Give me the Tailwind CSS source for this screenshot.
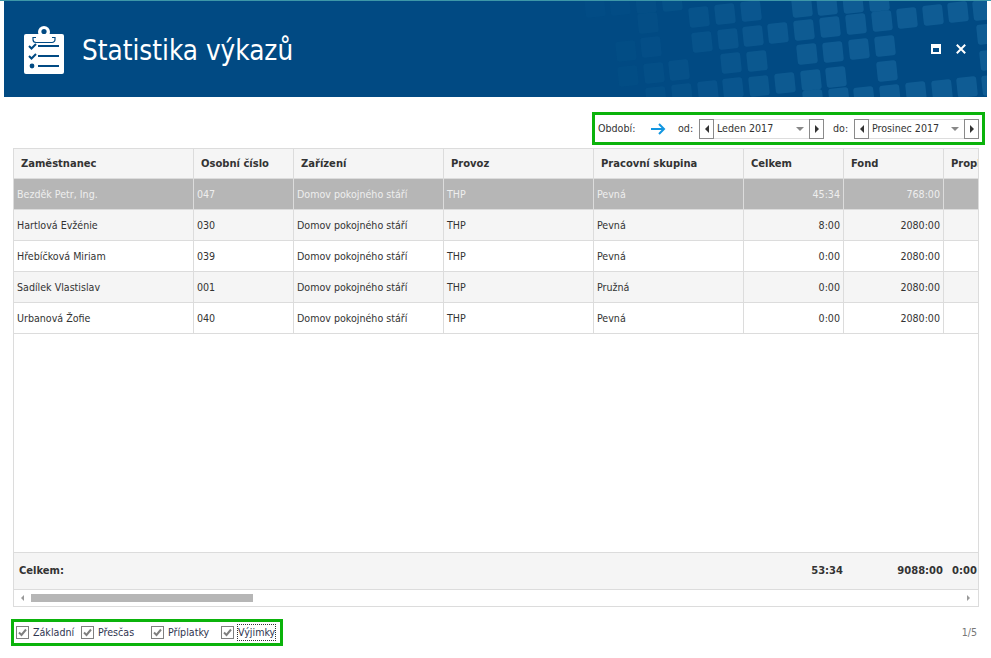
<!DOCTYPE html>
<html lang="cs">
<head>
<meta charset="UTF-8" />
<meta name="viewport" content="width=device-width, initial-scale=1" />
<title>Statistika výkazů</title>
<script src="https://cdn.jsdelivr.net/npm/@tailwindcss/browser@4"></script>
</head>
<body class="bg-white">
<div class="w-[991px] h-[658px] overflow-hidden font-['DejaVu_Sans',sans-serif] font-stretch-condensed text-[10.6px] text-[#333]">

  <!-- Hlavicka -->
  <div class="h-px bg-[#3d97a8]"></div>
  <header class="relative ml-1 w-[983px] h-[96px] bg-[#014a83] overflow-hidden flex items-center">
    <svg id="tiles" class="absolute left-0 top-0" width="983" height="96" viewBox="4 1 983 96"></svg>
    <svg class="relative ml-5 mt-[1px]" width="40" height="48" viewBox="0 0 40 48">
      <rect x="0" y="8" width="40" height="40" rx="2" fill="#fff" />
      <circle cx="20" cy="6" r="6" fill="#fff" />
      <path d="M9 11.5h22v2a3 3 0 0 1-3 3H12a3 3 0 0 1-3-3z" fill="#fff" stroke="#014a83" stroke-width="1.2" />
      <path d="M12 8h16v5H12z" fill="#fff" />
      <circle cx="20" cy="5.5" r="2.6" fill="#014a83" />
      <path d="M5 20l2.5 2.5L12 18M5 30l2.5 2.5L12 28" fill="none" stroke="#014a83" stroke-width="2" />
      <circle cx="8" cy="40" r="2.4" fill="#014a83" />
      <path d="M14 20h21M14 30h21M14 40h21" stroke="#014a83" stroke-width="2.2" />
    </svg>
    <h1 class="relative ml-[18px] mt-1 text-[27.6px] leading-none text-white font-normal">Statistika výkazů</h1>
    <div class="absolute right-[21px] top-[43px] flex items-center gap-[15px]">
      <svg width="10" height="10" viewBox="0 0 10 10"><path fill-rule="evenodd" d="M0 0h10v10H0zM2 4v4h6V4z" fill="#fff" /></svg>
      <svg width="10" height="10" viewBox="0 0 10 10"><path d="M.8.8l8.4 8.4M9.2.8L.8 9.2" stroke="#fff" stroke-width="2" /></svg>
    </div>
  </header>

  <!-- Obdobi -->
  <div class="mt-[15px] ml-[592px] w-[393px] h-[33px] border-[3px] border-[#0bb30b] flex items-center pl-[3px]">
    <span class="w-[53px]">Období:</span>
    <svg width="15" height="12" viewBox="0 0 15 12"><path d="M0 6h13M8 1l5 5-5 5" fill="none" stroke="#1296e0" stroke-width="2" /></svg>
    <span class="ml-3 w-[21px]">od:</span>
    <div class="flex h-5">
      <button class="w-[15px] border border-[#8a8a8a] bg-white flex items-center justify-center"><span class="border-y-[4px] border-r-[4px] border-y-transparent border-r-[#333]"></span></button>
      <div class="w-[95px] border-y border-[#ddd] flex items-center justify-between pl-[3px] pr-[5px]">Leden 2017<span class="border-x-[4px] border-t-[4px] border-x-transparent border-t-[#888]"></span></div>
      <button class="w-[15px] border border-[#8a8a8a] bg-white flex items-center justify-center"><span class="border-y-[4px] border-l-[4px] border-y-transparent border-l-[#333]"></span></button>
    </div>
    <span class="ml-[9px] w-[21px]">do:</span>
    <div class="flex h-5">
      <button class="w-[15px] border border-[#8a8a8a] bg-white flex items-center justify-center"><span class="border-y-[4px] border-r-[4px] border-y-transparent border-r-[#333]"></span></button>
      <div class="w-[95px] border-y border-[#ddd] flex items-center justify-between pl-[3px] pr-[5px]">Prosinec 2017<span class="border-x-[4px] border-t-[4px] border-x-transparent border-t-[#888]"></span></div>
      <button class="w-[15px] border border-[#8a8a8a] bg-white flex items-center justify-center"><span class="border-y-[4px] border-l-[4px] border-y-transparent border-l-[#333]"></span></button>
    </div>
  </div>

  <!-- Tabulka -->
  <div class="mt-[3px] ml-[13px] w-[966px] h-[459px] border border-[#dcdcdc] flex flex-col overflow-hidden">
    <div class="flex h-[30px] shrink-0 bg-[#f5f5f5] border-b border-[#dcdcdc] font-bold text-[11.1px]">
      <div class="w-[180px] shrink-0 border-r border-[#dcdcdc] pl-[7px] pt-px flex items-center">Zaměstnanec</div>
      <div class="w-[100px] shrink-0 border-r border-[#dcdcdc] pl-[7px] pt-px flex items-center">Osobní číslo</div>
      <div class="w-[150px] shrink-0 border-r border-[#dcdcdc] pl-[7px] pt-px flex items-center">Zařízení</div>
      <div class="w-[150px] shrink-0 border-r border-[#dcdcdc] pl-[7px] pt-px flex items-center">Provoz</div>
      <div class="w-[150px] shrink-0 border-r border-[#dcdcdc] pl-[7px] pt-px flex items-center">Pracovní skupina</div>
      <div class="w-[100px] shrink-0 border-r border-[#dcdcdc] pl-[7px] pt-px flex items-center">Celkem</div>
      <div class="w-[100px] shrink-0 border-r border-[#dcdcdc] pl-[7px] pt-px flex items-center">Fond</div>
      <div class="w-[100px] shrink-0 pl-[7px] pt-px flex items-center">Proplaceno</div>
    </div>
    <div id="rows" class="flex-1"></div>
    <div class="h-[38px] shrink-0 bg-[#f5f5f5] border-y border-[#dcdcdc] pt-px flex items-center font-bold text-[11.1px]">
      <div class="w-[729px] shrink-0 pl-[5px]">Celkem:</div>
      <div class="w-[100px] shrink-0 text-right">53:34</div>
      <div class="w-[100px] shrink-0 text-right">9088:00</div>
      <div class="ml-[9px]">0:00</div>
    </div>
    <div class="h-[16px] shrink-0 flex items-center pl-[7px] pr-[8px]">
      <span class="border-y-[3px] border-r-[3px] border-y-transparent border-r-[#999]"></span>
      <div class="ml-[7px] w-[222px] h-2 bg-[#b6b6b6]"></div>
      <span class="ml-auto border-y-[3px] border-l-[3px] border-y-transparent border-l-[#999]"></span>
    </div>
  </div>

  <!-- Filtry -->
  <div class="mt-3 ml-[11px] mr-[14px] flex items-center justify-between">
    <div class="w-[272px] h-[27px] border-[3px] border-[#0bb30b] flex items-center pl-[2px] text-[#2f3550]">
      <div id="checks" class="flex items-center"></div>
    </div>
    <span class="text-[#777]">1/5</span>
  </div>
</div>

<script>
// dlazdice v pozadi hlavicky
const tiles = [
  [595,7],[620,5],[646,3],[672,1],[648,23],[626,51],[651,47],[628,76],[654,73],[679,70],
  [656,97],[682,94],[708,91],[733,88],[759,86],[699,17],[725,14],[751,11],[702,42],[728,39],
  [753,36],[778,33],[731,63],[757,61],[802,7],[827,5],[853,3],[879,1],[804,30],[830,27],
  [856,24],[882,21],[907,18],[933,15],[958,12],[983,10],[807,54],[833,52],[859,49],[885,46],
  [987,34],[887,71],[990,60],[785,83],[811,80],[836,77],[813,100],[839,98],[864,97],[890,95],
  [916,92],[942,90],[967,87],[992,85]
];
document.getElementById('tiles').innerHTML = tiles.map(([x, y]) => {
  const a = Math.max(0.03, Math.min(0.22, (x - 590) / 230 * 0.22));
  return `<rect x="${x - 10}" y="${y - 10}" width="20" height="20" rx="3" fill="#44a0d0" fill-opacity="${a}" transform="rotate(-6 ${x} ${y})" />`;
}).join('');

const people = [
  ['Bezděk Petr, Ing.', '047', 'Pevná', '45:34', '768:00'],
  ['Hartlová Evžénie', '030', 'Pevná', '8:00', '2080:00'],
  ['Hřebíčková Miriam', '039', 'Pevná', '0:00', '2080:00'],
  ['Sadílek Vlastislav', '001', 'Pružná', '0:00', '2080:00'],
  ['Urbanová Žofie', '040', 'Pevná', '0:00', '2080:00']
];
const cell = 'shrink-0 border-r border-[#dcdcdc] px-[3px] pt-px flex items-center';
document.getElementById('rows').innerHTML = people.map((p, i) => {
  const bg = i === 0 ? 'bg-[#b6b6b6] text-[#eeeeee]' : i % 2 ? 'bg-[#f5f5f5]' : 'bg-white';
  return `<div class="flex h-[31px] border-b border-[#dcdcdc] ${bg}">
    <div class="w-[180px] ${cell}">${p[0]}</div>
    <div class="w-[100px] ${cell}">${p[1]}</div>
    <div class="w-[150px] ${cell}">Domov pokojného stáří</div>
    <div class="w-[150px] ${cell}">THP</div>
    <div class="w-[150px] ${cell}">${p[2]}</div>
    <div class="w-[100px] ${cell} justify-end">${p[3]}</div>
    <div class="w-[100px] ${cell} justify-end">${p[4]}</div>
  </div>`;
}).join('');

const checks = [['Základní', 'w-[65px]', ''], ['Přesčas', 'w-[70px]', ''], ['Příplatky', 'w-[70px]', ''], ['Výjimky', '', 'outline outline-1 outline-dotted outline-[#333]']];
document.getElementById('checks').innerHTML = checks.map(c => `<label class="flex items-center ${c[1]}">
  <svg width="13" height="13" viewBox="0 0 13 13"><rect x=".5" y=".5" width="12" height="12" fill="#fff" stroke="#808080" /><path d="M3 6.5l2.5 2.5L10 3.5" fill="none" stroke="#808080" stroke-width="2" /></svg>
  <span class="ml-[4px] ${c[2]}">${c[0]}</span></label>`).join('');
</script>
</body>
</html>
